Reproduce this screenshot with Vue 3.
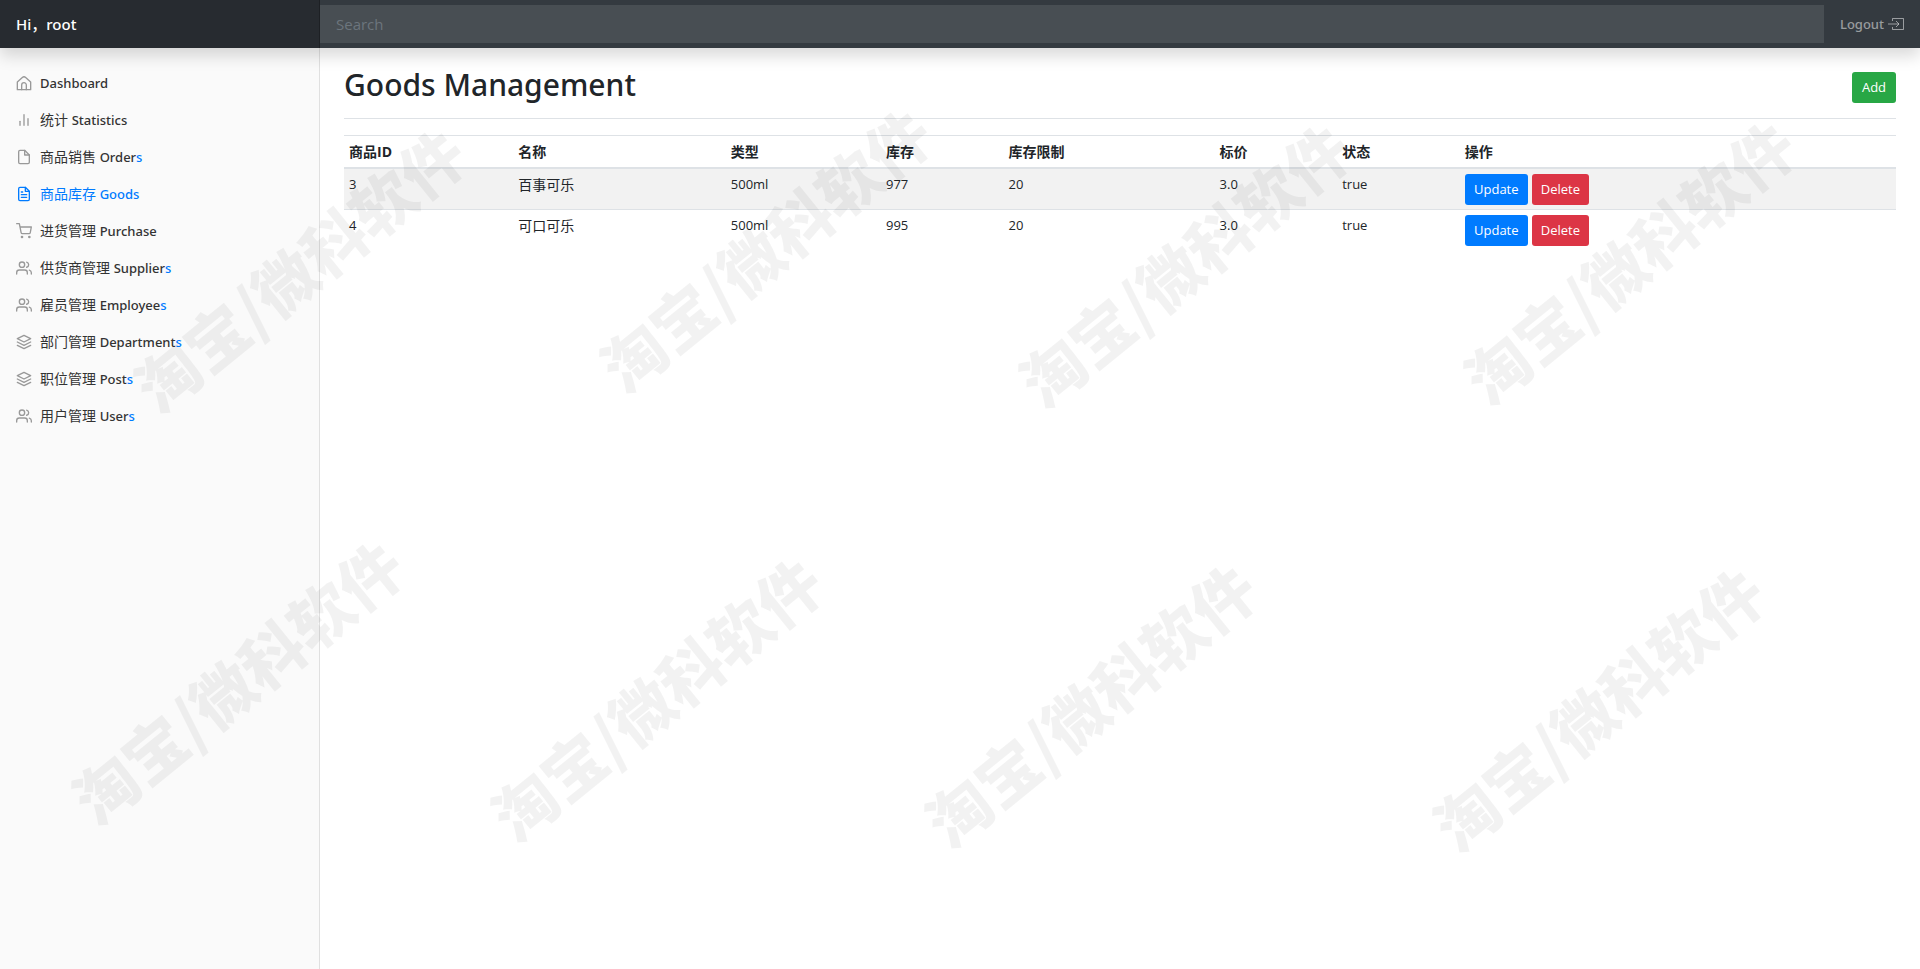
<script setup>
import { ref } from 'vue'

const keyword = ref('')

const menus = [
  { zh: '', en: 'Dashboard', tail: '', icon: 'home' },
  { zh: '统计', en: 'Statistics', tail: '', icon: 'chart' },
  { zh: '商品销售', en: 'Order', tail: 's', icon: 'file' },
  { zh: '商品库存', en: 'Goods', tail: '', icon: 'fileText', active: true },
  { zh: '进货管理', en: 'Purchase', tail: '', icon: 'cart' },
  { zh: '供货商管理', en: 'Supplier', tail: 's', icon: 'users' },
  { zh: '雇员管理', en: 'Employee', tail: 's', icon: 'users' },
  { zh: '部门管理', en: 'Department', tail: 's', icon: 'layers' },
  { zh: '职位管理', en: 'Post', tail: 's', icon: 'layers' },
  { zh: '用户管理', en: 'User', tail: 's', icon: 'users' }
]

const icons = {
  home: ['M2 22V10.500L9.500 3.600q2.500-2 5 0L22 10.500V22z', 'M8.500 22v-7a3.500 3.500 0 0 1 7 0v7'],
  chart: ['M18 20V10', 'M12 20V4', 'M6 20v-6'],
  file: ['M13 2H6a2 2 0 0 0-2 2v16a2 2 0 0 0 2 2h12a2 2 0 0 0 2-2V9z', 'M13 2v7h7'],
  fileText: ['M14 2H6a2 2 0 0 0-2 2v16a2 2 0 0 0 2 2h12a2 2 0 0 0 2-2V8z', 'M14 2v6h6', 'M16 13H8', 'M16 17H8', 'M10 9H8'],
  cart: ['M8 21a1 1 0 1 0 2 0 1 1 0 1 0-2 0', 'M19 21a1 1 0 1 0 2 0 1 1 0 1 0-2 0', 'M1 1h4l2.68 13.39a2 2 0 0 0 2 1.61h9.72a2 2 0 0 0 2-1.61L23 6H6'],
  users: ['M17 21v-2a4 4 0 0 0-4-4H5a4 4 0 0 0-4 4v2', 'M5 7a4 4 0 1 0 8 0 4 4 0 1 0-8 0', 'M23 21v-2a4 4 0 0 0-3-3.87', 'M16 3.13a4 4 0 0 1 0 7.75'],
  layers: ['M12 2L2 7l10 5 10-5z', 'M2 17l10 5 10-5', 'M2 12l10 5 10-5']
}

const columns = [
  { title: '商品ID', width: '10.9%' },
  { title: '名称', width: '13.7%' },
  { title: '类型', width: '10%' },
  { title: '库存', width: '7.9%' },
  { title: '库存限制', width: '13.6%' },
  { title: '标价', width: '7.9%' },
  { title: '状态', width: '7.9%' },
  { title: '操作', width: '28.1%' }
]

const goods = ref([
  { id: 3, name: '百事可乐', type: '500ml', stock: 977, limit: 20, price: '3.0', status: true },
  { id: 4, name: '可口可乐', type: '500ml', stock: 995, limit: 20, price: '3.0', status: true }
])

// 水印中心点
const marks = [
  { left: '15.5%', top: '27.7%' },
  { left: '39.8%', top: '25.6%' },
  { left: '61.6%', top: '27.1%' },
  { left: '84.8%', top: '26.8%' },
  { left: '12.3%', top: '70.2%' },
  { left: '34.1%', top: '71.9%' },
  { left: '56.7%', top: '72.5%' },
  { left: '83.2%', top: '73%' }
]
</script>

<template>
  <div class="page">
    <header class="navbar">
      <a class="brand" href="#">Hi，root</a>
      <input v-model="keyword" class="search" type="text" placeholder="Search" aria-label="Search" />
      <a class="logout" href="#">
        Logout
        <svg width="16" height="14" viewBox="0 0 16 14" fill="none" stroke="currentColor">
          <path d="M4.500 4V1.500H15.500V12.500H4.500V10" />
          <path d="M0 7H11M8 4L11 7L8 10" />
        </svg>
      </a>
    </header>

    <div class="body">
      <nav class="sidebar">
        <ul>
          <li v-for="m in menus" :key="m.en">
            <a class="nav-link" :class="{ active: m.active }" href="#">
              <svg class="feather" width="16" height="16" viewBox="0 0 24 24">
                <path v-for="d in icons[m.icon]" :key="d" :d="d" />
              </svg>
              <span>{{ m.zh }} <span class="en">{{ m.en }}<span class="tail">{{ m.tail }}</span></span></span>
            </a>
          </li>
        </ul>
      </nav>

      <main class="main">
        <div class="heading">
          <h1>Goods Management</h1>
          <button class="btn btn-success" type="button">Add</button>
        </div>

        <table class="table">
          <colgroup>
            <col v-for="c in columns" :key="c.title" :style="{ width: c.width }" />
          </colgroup>
          <thead>
            <tr>
              <th v-for="c in columns" :key="c.title" scope="col">{{ c.title }}</th>
            </tr>
          </thead>
          <tbody>
            <tr v-for="g in goods" :key="g.id">
              <td>{{ g.id }}</td>
              <td class="name">{{ g.name }}</td>
              <td>{{ g.type }}</td>
              <td>{{ g.stock }}</td>
              <td>{{ g.limit }}</td>
              <td>{{ g.price }}</td>
              <td>{{ g.status }}</td>
              <td>
                <div class="actions">
                  <button class="btn btn-primary" type="button">Update</button>
                  <button class="btn btn-danger" type="button">Delete</button>
                </div>
              </td>
            </tr>
          </tbody>
        </table>
      </main>
    </div>

    <div class="watermarks" aria-hidden="true">
      <span v-for="(w, i) in marks" :key="i" class="mark" :style="w">淘宝/微科软件</span>
    </div>
  </div>
</template>

<style>
body {
  margin: 0;
  background: #fff;
}
</style>

<style scoped>
.page {
  display: flex;
  flex-direction: column;
  min-height: 100vh;
  font-family: "Open Sans", "Noto Sans CJK SC", sans-serif;
  font-size: 14px;
  line-height: 21px;
  color: #212529;
}

a {
  text-decoration: none;
}

/* 顶栏 */
.navbar {
  position: relative;
  z-index: 2;
  display: flex;
  align-items: center;
  height: 48px;
  background: #343a40;
  box-shadow: 0 8px 16px rgba(0, 0, 0, 0.15);
}

.brand {
  box-sizing: border-box;
  width: 16.6667%;
  height: 48px;
  padding: 0 16px;
  font-family: "Noto Sans", "Noto Sans CJK SC", sans-serif;
  font-size: 15px;
  font-weight: 500;
  line-height: 48px;
  color: #fff;
  background: rgba(0, 0, 0, 0.25);
  box-shadow: inset -1px 0 0 rgba(0, 0, 0, 0.25);
}

.search {
  box-sizing: border-box;
  flex: 1;
  min-width: 0;
  height: 38px;
  padding: 0 16px;
  border: 0;
  font: inherit;
  font-size: 15px;
  color: #fff;
  background: rgba(255, 255, 255, 0.1);
}

.search::placeholder {
  color: #6c757d;
  opacity: 1;
}

.logout {
  display: flex;
  align-items: center;
  gap: 4px;
  padding: 0 16px;
  font-family: "Noto Sans", sans-serif;
  font-size: 13px;
  font-weight: 500;
  color: rgba(255, 255, 255, 0.5);
}

.body {
  display: flex;
  flex: 1;
}

/* 侧边栏 */
.sidebar {
  box-sizing: border-box;
  width: 16.6667%;
  padding-top: 16px;
  background: #fafafa;
  box-shadow: inset -1px 0 0 rgba(0, 0, 0, 0.1);
}

.sidebar ul {
  margin: 0;
  padding: 0;
  list-style: none;
}

.nav-link {
  display: flex;
  align-items: center;
  gap: 8px;
  height: 37px;
  padding: 0 16px;
  color: #333;
}

.en {
  font-family: "Noto Sans", sans-serif;
  font-size: 13px;
  font-weight: 500;
}

.tail {
  color: #007bff;
}

.feather {
  fill: none;
  stroke: #999;
  stroke-width: 2;
  stroke-linecap: round;
  stroke-linejoin: round;
}

.nav-link.active {
  color: #007bff;
}

.nav-link.active .feather {
  stroke: currentColor;
}

/* 主内容 */
.main {
  flex: 1;
  min-width: 0;
  padding: 16px 24px;
}

.heading {
  display: flex;
  align-items: center;
  justify-content: space-between;
  margin-bottom: 16px;
  padding-bottom: 8px;
  border-bottom: 1px solid #dee2e6;
}

h1 {
  margin: 0 0 4px;
  font-family: "Noto Sans", sans-serif;
  font-size: 30px;
  font-weight: 500;
  line-height: 42px;
}

.btn {
  padding: 4px 8px;
  border: 1px solid transparent;
  border-radius: 3px;
  font-family: inherit;
  font-size: 13px;
  line-height: 21px;
  color: #fff;
  cursor: pointer;
}

.btn-success {
  min-width: 44px;
  background: #28a745;
}

.btn-primary {
  min-width: 63px;
  background: #007bff;
}

.btn-danger {
  background: #dc3545;
}

.table {
  width: 100%;
  table-layout: fixed;
  border-spacing: 0;
}

.table th,
.table td {
  padding: 5px 5px 4px;
  text-align: left;
  vertical-align: top;
}

.table th {
  padding-bottom: 5px;
  border-top: 1px solid #dee2e6;
  border-bottom: 2px solid #dee2e6;
  font-weight: 700;
}

.table td {
  font-size: 13px;
}

.table td.name {
  font-size: 14px;
}

.table tbody tr + tr td {
  border-top: 1px solid #dee2e6;
}

.table tbody tr:nth-child(odd) {
  background: rgba(0, 0, 0, 0.05);
}

.actions {
  display: flex;
  gap: 4px;
}

/* 水印 */
.watermarks {
  position: fixed;
  inset: 0;
  z-index: 3;
  overflow: hidden;
  pointer-events: none;
  user-select: none;
}

.mark {
  position: absolute;
  font-family: "Noto Sans CJK SC", sans-serif;
  font-size: 63px;
  font-weight: 900;
  line-height: 1;
  white-space: nowrap;
  color: rgba(0, 0, 0, 0.05);
  transform: translate(-50%, -50%) rotate(-39deg);
}
</style>
